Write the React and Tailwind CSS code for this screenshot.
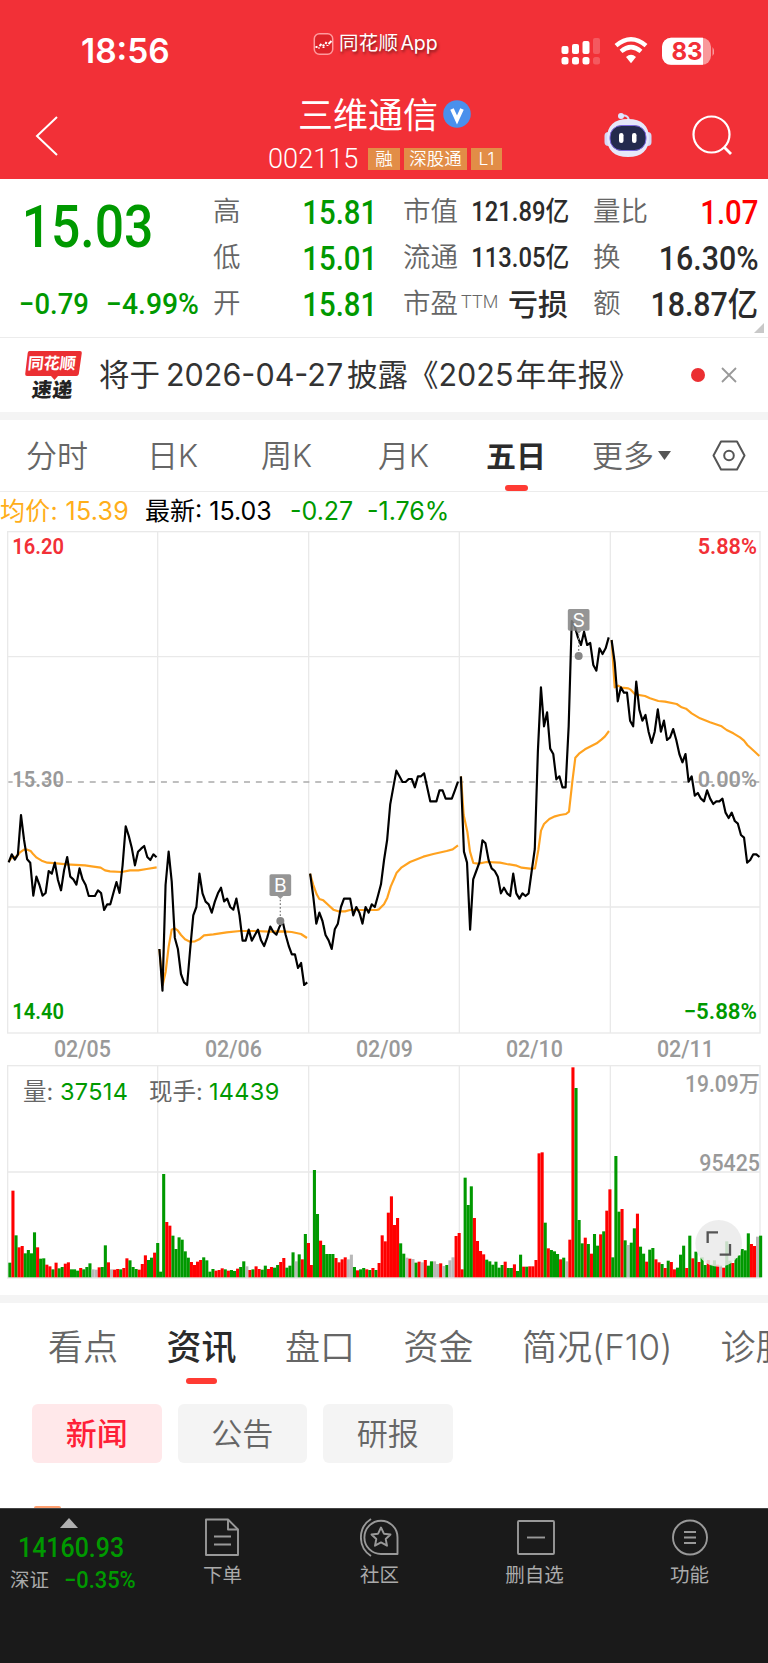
import clsx from "clsx";

const DAYS = ["02/05", "02/06", "02/09", "02/10", "02/11"];

// Chart space is 2304 units wide, 49 samples per trading day
const DAY_WIDTH = 452.2;
const STEP = 9.24;

const PRICES = [
	[1012, 988, 1004, 988, 870, 945, 1003, 1013, 1112, 1055, 1080, 1112, 1104, 1038, 1046, 1013, 1065, 1096, 1035, 996, 1055, 1063, 1079, 1030, 1063, 1080, 1113, 1113, 1113, 1096, 1104, 1155, 1138, 1138, 1104, 1071, 1104, 1020, 904, 933, 970, 1021, 980, 971, 963, 996, 1005, 988, 997],
	[1272, 1397, 1080, 980, 1070, 1238, 1272, 1347, 1372, 1380, 1272, 1171, 1146, 1046, 1105, 1130, 1138, 1163, 1130, 1105, 1088, 1129, 1121, 1146, 1154, 1121, 1171, 1247, 1247, 1214, 1247, 1230, 1214, 1246, 1263, 1238, 1205, 1221, 1229, 1205, 1188, 1230, 1263, 1288, 1288, 1329, 1314, 1380, 1372],
	[1046, 1113, 1196, 1163, 1188, 1230, 1246, 1272, 1213, 1196, 1146, 1121, 1121, 1121, 1171, 1146, 1163, 1196, 1146, 1163, 1138, 1146, 1113, 1078, 1005, 945, 838, 787, 737, 754, 771, 771, 762, 762, 787, 754, 754, 745, 787, 829, 829, 829, 796, 796, 821, 821, 821, 796, 770],
	[754, 980, 1013, 1214, 1063, 1038, 1013, 946, 955, 1005, 1030, 1038, 1055, 1105, 1088, 1105, 1113, 1046, 1105, 1121, 1105, 1113, 1105, 1038, 972, 680, 487, 604, 562, 671, 687, 763, 754, 787, 787, 604, 288, 304, 337, 360, 320, 360, 354, 420, 437, 370, 387, 370, 337],
	[345, 412, 529, 487, 503, 503, 587, 604, 470, 554, 587, 570, 620, 654, 620, 553, 620, 587, 645, 637, 612, 645, 687, 712, 687, 770, 754, 812, 804, 821, 829, 796, 821, 837, 829, 829, 821, 863, 879, 863, 888, 896, 930, 938, 1013, 1005, 988, 988, 996],
];

const AVERAGES = [
	"26,1010 35,998 50,995 60,982 72,974 82,974 92,978 100,988 110,998 125,1007 142,1013 170,1015 200,1018 255,1021 275,1024 302,1028 315,1036 330,1039 365,1041 390,1036 415,1036 440,1032 470,1027",
	"478,1272 488,1380 497,1340 506,1265 515,1214 524,1210 533,1216 543,1230 555,1243 570,1250 585,1249 598,1243 612,1231 640,1228 680,1222 720,1218 760,1218 810,1220 850,1219 875,1221 903,1227 921,1239",
	"930,1046 940,1080 950,1108 958,1122 970,1126 985,1140 1000,1154 1015,1159 1035,1159 1050,1155 1080,1155 1130,1155 1137,1153 1152,1138 1162,1118 1172,1085 1182,1062 1190,1043 1205,1027 1230,1011 1270,995 1300,987 1340,978 1358,973 1374,961",
	"1383,754 1391,870 1402,920 1410,980 1420,1014 1435,1016 1460,1011 1500,1013 1520,1017 1550,1022 1565,1028 1590,1031 1605,1030 1615,975 1623,917 1632,897 1648,882 1665,874 1680,870 1698,867 1707,860 1717,770 1726,698 1737,686 1755,673 1790,655 1805,643 1815,634 1827,618",
	"1835,345 1844,487 1855,482 1865,488 1885,490 1892,494 1905,508 1935,513 1950,520 1975,528 1995,530 2030,537 2045,547 2058,551 2075,565 2100,580 2130,592 2165,604 2180,615 2200,625 2220,637 2232,647 2242,660 2262,678 2278,693",
];

// r = up, g = down, x = flat; the number is the top of the bar
const VOLUMES = [
	"g698 r482 g616 r652 r648 g670 g660 g670 g607 r652 g686 g685 r704 r709 g718 r698 g715 g711 r701 r697 g718 g718 g722 r714 g718 g711 g700 x718 x719 r712 g711 g646 r697 x718 r719 r717 g718 r714 r685 g691 g711 g717 r719 r702 r676 g690 g683 r668 g639",
	"g725 g432 r576 r587 g617 g657 g622 g629 g664 g683 r696 r705 r695 r690 g682 g691 g725 g717 r722 r720 r715 g718 r722 g720 g723 r716 g711 g694 x709 r720 g718 r709 r717 g719 g707 r717 r711 g713 g705 r696 r684 g713 g707 g667 x694 g673 r688 g612 r639",
	"r705 g420 g552 r632 g645 g672 g672 g672 r684 r697 r688 r682 x688 x674 g711 r721 g718 g714 r718 g720 r714 g720 r699 r616 r634 r548 r499 r585 r564 g640 g671 x683 r686 x687 g698 r695 x697 r690 g707 g694 x694 x702 r700 x708 g705 x691 x682 r618 r609",
	"r718 g443 g525 g469 r564 r633 r663 r673 g689 g694 g704 g695 g713 g705 r695 g714 g714 r703 g723 g674 r710 g710 r709 r709 r690 r370 r367 g578 r655 g660 g664 g672 r688 g683 x694 r629 r112 g174 g570 g640 r623 g642 r671 g612 g647 r613 g604 r542 r478",
	"g682 g378 g545 r537 g631 x645 g638 g595 r551 g650 g671 r695 g659 g654 r688 r697 g702 r714 g692 r696 r718 g713 g674 g647 r714 g617 r685 g665 r696 g682 g705 r690 g704 g691 r704 x705 r713 g634 g692 r699 g684 g676 g657 g661 g610 r642 r648 x620 g617",
];

const BAR_COLORS = { r: "#ff0000", g: "#009900", x: "#b8b8b8" };
const GRID = "#e9e9e9";

const StatusBar = () => (
	<div className="flex h-[88px] items-center pt-4">
		<div className="w-[313px] pl-[81px] text-[33.5px] leading-none font-semibold">18:56</div>
		<div className="-mt-4 flex w-[246px] items-center gap-[5px]">
			<svg width="21" height="22" viewBox="0 0 20 22" fill="none">
				<rect x="0.8" y="0.8" width="18.4" height="20.4" rx="5" fill="#dd2329" stroke="#ff9a9d" strokeWidth="1.5" />
				<path d="M2 14h2M6 13l2-2M9 12l2 1M12 11l1-2M15 11l3-3M5 15h1M10 14v1M14 12v1" stroke="#fff" strokeWidth="2" />
			</svg>
			<span className="flex gap-[2px] text-[19.5px] leading-none whitespace-nowrap [text-shadow:1px_2px_3px_rgba(0,0,0,0.5)]">
				<span className="tracking-[0.3px]">同花顺</span>
				<span>App</span>
			</span>
		</div>
		<svg width="155" height="30" viewBox="0 0 155 30" fill="#fff">
			<rect x="2.5" y="9" width="7" height="8" rx="2" />
			<rect x="13" y="7" width="7" height="10" rx="2" />
			<rect x="23.5" y="4" width="7" height="13" rx="2" />
			<rect x="34" y="1" width="7" height="16" rx="2" opacity=".2" />
			<rect x="2.5" y="20" width="7" height="7.5" rx="2.5" />
			<rect x="13" y="20" width="7" height="7.5" rx="2.5" />
			<rect x="23.5" y="20" width="7" height="7.5" rx="2.5" />
			<rect x="34" y="20" width="7" height="7.5" rx="2.5" opacity=".2" />
			<path d="M57 8.7q15-12.8 30 0" fill="none" stroke="#fff" strokeWidth="4.4" />
			<path d="M62 14.4q10-8.6 20 0" fill="none" stroke="#fff" strokeWidth="4.4" />
			<path d="M67 20q5-4.6 10 0l-5 6.2z" />
			<rect x="103" y="0.8" width="49" height="27" rx="9" opacity=".5" />
			<path d="M112 0.8h32v27h-32a9 9 0 0 1-9-9v-9a9 9 0 0 1 9-9z" />
			<path d="M153.500 10v9q3.500-4.500 0-9z" opacity=".5" />
			<text x="128" y="23" textAnchor="middle" fontSize="24" fontWeight="700" fill="#f23037">83</text>
		</svg>
	</div>
);

const Robot = () => (
	<svg width="48" height="46" viewBox="0 0 48 46">
		<path d="M17 4q8-2 8 6" fill="none" stroke="#d9dcf6" strokeWidth="2" />
		<circle cx="17" cy="4" r="3" fill="#dfe6ff" />
		<rect x="0.500" y="20" width="8" height="14" rx="4" fill="#d5d8f6" />
		<rect x="39.500" y="20" width="8" height="14" rx="4" fill="#d5d8f6" />
		<path d="M24 7C38 7 45 14 45 26S38 45 24 45 3 38 3 26 10 7 24 7z" fill="#e6e8fa" />
		<rect x="6" y="13.500" width="36" height="25" rx="11.500" fill="#232a4d" stroke="#7c66e0" strokeWidth="1" />
		<rect x="15" y="21" width="4.500" height="10" rx="2.200" fill="#fff" />
		<rect x="28" y="21" width="4.500" height="10" rx="2.200" fill="#fff" />
	</svg>
);

const Header = () => (
	<header className="h-[179px] bg-[#f23037] text-white">
		<StatusBar />
		<div className="flex h-[91px] items-start">
			<svg className="mt-7 ml-[35px]" width="24" height="40" viewBox="0 0 24 40" fill="none" stroke="#fff" strokeWidth="2">
				<path d="M22 1L2 20l20 19" />
			</svg>
			<div className="ml-[209px] w-[336px]">
				<div className="ml-[30px] flex h-[54px] items-center gap-[5px]">
					<h1 className="text-[35px] leading-none font-normal">三维通信</h1>
					<svg className="-mt-0.5" width="28" height="28" viewBox="0 0 28 28">
						<circle cx="14" cy="14" r="13.800" fill="#4a90ec" />
						<path d="M9 9l5 11 5-11" fill="none" stroke="#fff" strokeWidth="3.800" />
					</svg>
				</div>
				<div className="flex h-[33px] items-center gap-1 text-[17.5px] leading-none font-[350]">
					<span className="w-[96px] origin-left scale-x-[0.97] font-['Roboto'] text-[28px]">002115</span>
					<span className="flex h-[22px] w-8 items-center justify-center bg-[#e28d47]">融</span>
					<span className="flex h-[22px] w-[63px] items-center justify-center bg-[#e28d47]">深股通</span>
					<span className="flex h-[22px] w-[31px] items-center justify-center bg-[#e28d47]">L1</span>
				</div>
			</div>
			<div className="mt-[24px]">
				<Robot />
			</div>
			<svg className="mt-[27px] ml-10" width="41" height="41" viewBox="0 0 41 41" fill="none" stroke="#fff" strokeWidth="2.200">
				<circle cx="19.500" cy="19.500" r="18" />
				<path d="M32 32l7 7" strokeWidth="2.800" />
			</svg>
		</div>
	</header>
);

const Quote = ({ label, sup, value, className }) => (
	<div className="flex h-[46px] items-center justify-between">
		<span className="flex items-center text-[27.5px] leading-none font-[350] whitespace-nowrap text-[#666]">
			{label}
			{sup && <span className="pb-1 pl-[3px] font-['Roboto'] text-[18px] leading-none">{sup}</span>}
		</span>
		<span className={clsx("origin-right leading-none font-medium whitespace-nowrap", className)}>{value}</span>
	</div>
);

const QuotePanel = () => (
	<section className="relative flex h-[159px] border-b border-[#ececec] pt-[10px]">
		<div className="w-[213px] pl-5 font-['Roboto'] text-[#009900]">
			<div className="h-[94px] origin-left scale-x-[0.86] pt-[8px] pl-[2px] text-[60px] leading-none font-medium">15.03</div>
			<div className="flex text-[29.5px] leading-[42px] font-medium whitespace-nowrap">
				<span className="-ml-px w-[87px] origin-left scale-x-[0.93]">−0.79</span>
				<span className="origin-left scale-x-[0.96]">−4.99%</span>
			</div>
		</div>
		<div className="w-[164px]">
			<Quote label="高" value="15.81" className="scale-x-[0.89] font-['Roboto'] text-[33px] text-[#009900]" />
			<Quote label="低" value="15.01" className="scale-x-[0.89] font-['Roboto'] text-[33px] text-[#009900]" />
			<Quote label="开" value="15.81" className="scale-x-[0.89] font-['Roboto'] text-[33px] text-[#009900]" />
		</div>
		<div className="ml-[26px] w-[165px] text-[#2b2b2b]">
			<Quote
				label="市值"
				value="121.89亿"
				className="scale-x-[0.88] font-['Roboto','Noto_Sans_CJK_SC',sans-serif] text-[27px]"
			/>
			<Quote
				label="流通"
				value="113.05亿"
				className="scale-x-[0.88] font-['Roboto','Noto_Sans_CJK_SC',sans-serif] text-[27px]"
			/>
			<Quote label="市盈" sup="TTM" value="亏损" className="text-[30px]" />
		</div>
		<div className="ml-[25px] w-[165px] text-[#2b2b2b]">
			<Quote label="量比" value="1.07" className="scale-x-[0.89] font-['Roboto'] text-[33px] text-[#ff0000]" />
			<Quote label="换" value="16.30%" className="scale-x-[0.92] font-['Roboto'] text-[33px]" />
			<Quote
				label="额"
				value="18.87亿"
				className="scale-x-[0.92] font-['Roboto','Noto_Sans_CJK_SC',sans-serif] text-[33px]"
			/>
		</div>
		<svg className="absolute right-1 bottom-1" width="10" height="10" viewBox="0 0 10 10">
			<path d="M10 0v10H0z" fill="#c8c8c8" />
		</svg>
	</section>
);

const Notice = () => (
	<section className="flex h-[74px] items-center pl-[24px]">
		<div className="relative flex w-[57px] flex-col items-center">
			<div className="relative flex h-[25px] w-[56px] items-center justify-center">
				<svg className="absolute inset-0" width="57" height="30" viewBox="0 0 57 30">
					<path d="M4.500 0H55q2 0 1.800 2l-3 21q-.4 2-2.500 2H33l-3.500 4-3.500-4H2q-2 0-1.800-2l2.500-21q.3-2 1.800-2z" fill="#eb2f32" />
				</svg>
				<span className="relative -skew-x-6 text-[16px] leading-none font-bold text-white">同花顺</span>
			</div>
			<span className="mt-1 -skew-x-6 text-[20px] leading-none font-black tracking-wide text-[#222]">速递</span>
		</div>
		<p className="ml-[18px] flex w-[608px] text-[30.5px] leading-none whitespace-nowrap text-[#333]">
			<span>将于</span>
			<span className="w-[187px] pl-[6px]">2026-04-27</span>
			<span>披露《</span>
			<span className="w-[77px]">2025</span>
			<span className="tracking-[0.6px]">年年报》</span>
		</p>
		<span className="-ml-4 h-3.5 w-3.5 rounded-full bg-[#eb2f32]" />
		<svg className="ml-[16px]" width="16" height="16" viewBox="0 0 16 16" stroke="#999" strokeWidth="1.800">
			<path d="M1 1l14 14M15 1L1 15" />
		</svg>
	</section>
);

const PeriodTabs = () => (
	<nav className="flex h-[72px] items-center border-b border-[#ececec] pl-[26px] text-[31px] leading-none font-[350] whitespace-nowrap text-[#666]">
		<span className="w-[121px]">分时</span>
		<span className="w-[114px]">日K</span>
		<span className="w-[117px]">周K</span>
		<span className="w-[108px]">月K</span>
		<span className="relative w-[106px] text-[30px] font-bold text-[#2b2b2b]">
			五日
			<i className="absolute top-[44px] left-[19px] h-[6px] w-[23px] rounded-sm bg-[#ff3b33]" />
		</span>
		<span className="flex w-[120px] items-center gap-1">
			更多
			<svg width="13" height="9" viewBox="0 0 13 9">
				<path d="M0 0h13L6.500 9z" fill="#555" />
			</svg>
		</span>
		<svg width="34" height="31" viewBox="0 0 34 31" fill="none" stroke="#555" strokeWidth="2">
			<path d="M9 1.500h16l7.500 14-7.500 14H9L1.500 15.500z" strokeLinejoin="round" />
			<circle cx="17" cy="15.500" r="4.800" />
		</svg>
	</nav>
);

const Marker = ({ x, y, dotY, children }) => (
	<g>
		<path d={`M${x - 9} ${y + 65}h18l-9 9z`} fill="#858585" opacity=".85" />
		<line x1={x} y1={y + 76} x2={x} y2={dotY - 12} stroke="#858585" strokeWidth="4" strokeDasharray="5 6" />
		<circle cx={x} cy={dotY} r="12" fill="#858585" />
		<rect x={x - 32.5} y={y} width="65" height="65" rx="5" fill="#858585" opacity=".87" />
		<text x={x} y={y + 53} textAnchor="middle" fontSize="58" fill="#fff">
			{children}
		</text>
	</g>
);

const GridLines = ({ top, bottom, rows }) => (
	<g stroke={GRID} strokeWidth="4" fill="none">
		<rect x="23" y={top} width="2257" height={bottom - top} />
		{[473, 926, 1378, 1831].map((x) => (
			<line key={x} x1={x} x2={x} y1={top} y2={bottom} />
		))}
		{rows.map((y) => (
			<line key={y} x1="23" x2="2280" y1={y} y2={y} />
		))}
	</g>
);

const PriceChart = () => {
	const labels = [
		{ text: "16.20", x: 37, y: 87, width: 155, color: "#f23037" },
		{ text: "15.30", x: 37, y: 785, width: 155, color: "#999" },
		{ text: "14.40", x: 37, y: 1482, width: 155, color: "#009900" },
		{ text: "5.88%", x: 2093, y: 87, width: 178, color: "#f23037" },
		{ text: "0.00%", x: 2093, y: 785, width: 178, color: "#999" },
		{ text: "−5.88%", x: 2051, y: 1482, width: 220, color: "#009900" },
	];

	return (
		<svg className="block" width="768" height="510" viewBox="0 0 2304 1530">
			<GridLines top={20} bottom={1524} rows={[395, 1146]} />
			<line x1="25" x2="2278" y1="771" y2="771" stroke="#aaa" strokeWidth="5" strokeDasharray="18 17.600" strokeDashoffset="5" />
			{AVERAGES.map((points) => (
				<polyline key={points} points={points} fill="none" stroke="#ffa21f" strokeWidth="6.500" strokeLinejoin="round" />
			))}
			{PRICES.map((day, d) => (
				<polyline
					key={d}
					points={day.map((y, i) => `${26 + d * DAY_WIDTH + i * STEP},${y}`).join(" ")}
					fill="none"
					stroke="#000"
					strokeWidth="6.500"
					strokeLinejoin="round"
				/>
			))}
			<Marker x={841} y={1048} dotY={1188}>B</Marker>
			<Marker x={1736} y={252} dotY={393}>S</Marker>
			{labels.map((l) => (
				<text
					key={l.text}
					x={l.x}
					y={l.y}
					textLength={l.width}
					lengthAdjust="spacingAndGlyphs"
					fill={l.color}
					className="font-['Roboto'] text-[67px] font-semibold">
					{l.text}
				</text>
			))}
		</svg>
	);
};

const VolumeChart = () => (
	<div className="relative">
		<svg className="block" width="768" height="220" viewBox="0 99 2304 660">
			<GridLines top={107} bottom={744} rows={[426]} />
			{VOLUMES.map((day, d) =>
				day.split(" ").map((bar, i) => (
					<rect
						key={`${d}-${i}`}
						x={25 + d * DAY_WIDTH + i * STEP}
						y={bar.slice(1)}
						width="9.240"
						height={742 - bar.slice(1)}
						fill={BAR_COLORS[bar[0]]}
					/>
				))
			)}
			<g fill="#999" className="font-['Roboto','Noto_Sans_CJK_SC',sans-serif] text-[69px] font-medium">
				<text x="2055" y="185" textLength="224" lengthAdjust="spacingAndGlyphs">19.09万</text>
				<text x="2098" y="422" textLength="182" lengthAdjust="spacingAndGlyphs">95425</text>
			</g>
			<circle cx="2156" cy="640" r="70" fill="#eaeaea" opacity=".85" />
			<path d="M2123 639v-32h31M2190 642v32h-31" fill="none" stroke="#555" strokeWidth="7" />
		</svg>
		<div className="absolute top-[17px] left-[23px] flex text-[23.5px] leading-none whitespace-nowrap text-[#666]">
			<span className="w-[37px]">量:</span>
			<span className="w-[89px] tracking-[0.3px] text-[#009900]">37514</span>
			<span className="w-[60px]">现手:</span>
			<span className="tracking-[0.3px] text-[#009900]">14439</span>
		</div>
	</div>
);

const InfoTabs = () => (
	<nav className="flex h-[101px] items-start gap-[48.5px] overflow-hidden pt-[27px] pl-[48px] text-[35px] leading-none font-[350] whitespace-nowrap text-[#666]">
		<span>看点</span>
		<span className="relative font-medium text-[#2b2b2b]">
			资讯
			<i className="absolute top-[48px] left-[19px] h-[6px] w-[31px] rounded-sm bg-[#ff3b33]" />
		</span>
		<span>盘口</span>
		<span>资金</span>
		<span className="w-[150px]">简况(F10)</span>
		<span>诊股</span>
	</nav>
);

const Chips = () => (
	<div className="flex h-[104px] flex-col justify-between pl-8">
		<div className="flex gap-4 text-[31px] leading-none text-[#666]">
			<span className="flex h-[59px] w-[129.5px] items-center justify-center rounded-md bg-[#ffe8ea] pb-px font-medium text-[#ff1f38]">
				新闻
			</span>
			<span className="flex h-[59px] w-[129.5px] items-center justify-center rounded-md bg-[#f4f4f4] font-[350]">公告</span>
			<span className="flex h-[59px] w-[129.5px] items-center justify-center rounded-md bg-[#f4f4f4] font-[350]">研报</span>
		</div>
		{/* Top edge of the first news badge */}
		<div className="ml-0.5 h-[2px] w-[27px] rounded-t-sm bg-[#ffa070]" />
	</div>
);

const NAV_ITEMS = [
	{
		label: "下单",
		width: "w-[159px]",
		icon: (
			<>
				<path d="M3 1.500h22l10 10v25.500H3z" />
				<path d="M25 1.500v10h10M11 18.500h17M11 26.500h17" />
			</>
		),
	},
	{
		label: "社区",
		width: "w-[155px]",
		icon: (
			<>
				<path d="M21 2.800A16.500 16.500 0 0 0 21 36h16.500V19.300A16.500 16.500 0 0 0 21 2.800z" />
				<path d="M11 1A22 22 0 0 0 11 38" />
				<path d="M21 9.500l2.900 6.200 6.600.8-4.800 4.500 1.300 6.700-6-3.300-6 3.300 1.300-6.700-4.800-4.500 6.600-.8z" />
			</>
		),
	},
	{
		label: "删自选",
		width: "w-[155px]",
		icon: (
			<>
				<rect x="3" y="3" width="36" height="33" rx="1" />
				<path d="M12 19.500h18" />
			</>
		),
	},
	{
		label: "功能",
		width: "w-[155px]",
		icon: (
			<>
				<circle cx="20" cy="19.500" r="17" />
				<path d="M14 14h12M14 19.500h12M14 25h12" />
			</>
		),
	},
];

const BottomBar = () => (
	<footer className="flex h-[155px] border-t border-[#444] bg-[#1a1a1a] text-[#aaa]">
		<div className="flex w-[143px] flex-col">
			<svg className="mt-[9px] ml-[60px]" width="18" height="10" viewBox="0 0 18 10">
				<path d="M9 0l9 10H0z" fill="#b0b0b0" />
			</svg>
			<div className="mt-[5px] ml-[18px] origin-left scale-x-[0.89] font-['Roboto'] text-[28px] leading-[30px] font-medium text-[#009900]">
				14160.93
			</div>
			<div className="ml-[10px] flex items-center text-[19.5px] leading-[31px] whitespace-nowrap">
				<span className="w-[54px] pt-0.5">深证</span>
				<span className="origin-left scale-x-[0.91] font-['Roboto'] text-[24px] leading-none font-medium text-[#009900]">
					−0.35%
				</span>
			</div>
		</div>
		{NAV_ITEMS.map((item) => (
			<div key={item.label} className={clsx("flex flex-col items-center pt-[9px] text-[19.5px] leading-none", item.width)}>
				<svg width="40" height="39" viewBox="0 0 40 39" fill="none" stroke="#999" strokeWidth="1.900" strokeLinejoin="round">
					{item.icon}
				</svg>
				<span className="mt-[9px]">{item.label}</span>
			</div>
		))}
	</footer>
);

const App = () => (
	<div className="flex h-[1663px] w-[768px] flex-col overflow-hidden bg-white font-['Inter','Noto_Sans_CJK_SC',sans-serif]">
		<Header />
		<QuotePanel />
		<Notice />
		<div className="h-2 bg-[#f4f4f4]" />
		<PeriodTabs />
		<div className="flex h-[33px] items-center pt-[6px] text-[25px] leading-none whitespace-nowrap">
			<span className="w-[145px] tracking-[0.3px] text-[#ffae1a]">均价: 15.39</span>
			<span className="w-[145px]">最新: 15.03</span>
			<span className="w-[77px] text-[#009900]">-0.27</span>
			<span className="text-[#009900]">-1.76%</span>
		</div>
		<PriceChart />
		<div className="flex h-7 items-center pl-[7px]">
			{DAYS.map((day) => (
				<span
					key={day}
					className="w-[150.8px] scale-x-[0.93] text-center font-['Roboto'] text-[23px] leading-none font-medium text-[#999]">
					{day}
				</span>
			))}
		</div>
		<VolumeChart />
		<div className="mt-3 h-2 shrink-0 bg-[#f4f4f4]" />
		<InfoTabs />
		<Chips />
		<BottomBar />
	</div>
);

export default App;
